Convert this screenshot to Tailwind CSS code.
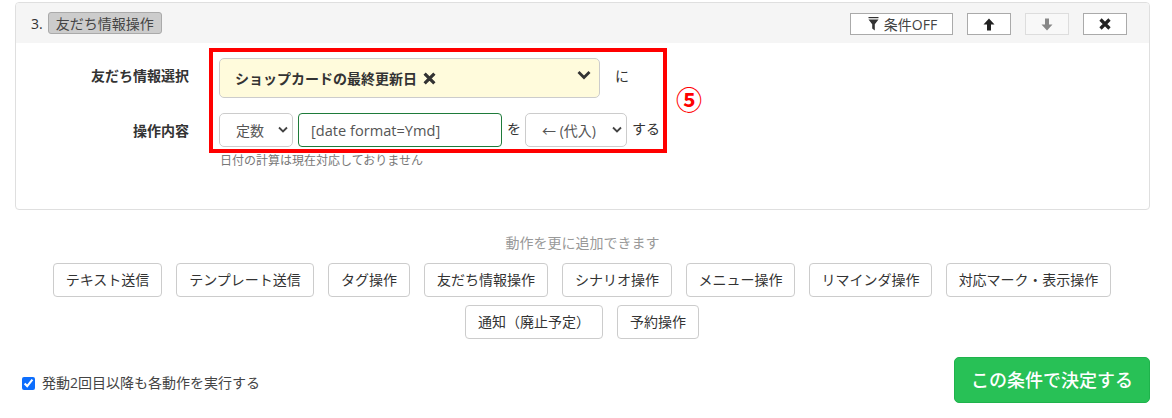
<!DOCTYPE html>
<html lang="ja">
<head>
    <meta charset="UTF-8">
    <title>友だち情報操作</title>
    <script src="https://cdn.jsdelivr.net/npm/@tailwindcss/browser@4"></script>
</head>
<body class="bg-white text-[#333] font-['Open_Sans','Noto_Sans_CJK_JP',sans-serif] text-[14px] overflow-hidden">
<div class="relative w-[1172px] h-[418px] pt-[2px] pl-[15px] pr-[22px]">

    <!-- Action card -->
    <div class="h-[208px] border border-[#dfdfdf] rounded-[4px] overflow-hidden">
        <div class="h-[40px] bg-[#f5f5f5] flex items-center pl-[15px] pr-[22px]">
            <span class="mr-[5px]">3.</span>
            <span class="h-[22px] px-[7px] flex items-center bg-[#cccccc] border border-[#aaa] rounded-[3px] text-[#444]">友だち情報操作</span>
            <div class="ml-auto mt-[2px] flex items-center gap-[14px]">
                <button class="w-[103px] h-[22px] flex items-center justify-center gap-[5px] pl-[2px] bg-white border border-[#aaa] text-[#444]">
                    <svg width="11" height="14" viewBox="0 0 11 14" fill="#333"><rect x="0.5" y="0" width="10" height="1.2"/><path d="M0.5 2.6h10L6.8 7.2V13.5L4.2 11.5V7.2z"/></svg>
                    条件OFF
                </button>
                <button class="w-[44px] h-[22px] flex items-center justify-center bg-white border border-[#aaa]">
                    <svg width="12" height="13" viewBox="0 0 12 13" fill="#222"><path d="M6 0.5L11.5 6.5H8V12.5H4V6.5H0.5z"/></svg>
                </button>
                <button class="w-[44px] h-[22px] flex items-center justify-center bg-[#f8f8f8] border border-[#ddd]">
                    <svg width="12" height="13" viewBox="0 0 12 13" fill="#888"><path d="M6 12.5L11.5 6.5H8V0.5H4V6.5H0.5z"/></svg>
                </button>
                <button class="w-[44px] h-[22px] flex items-center justify-center bg-white border border-[#aaa]">
                    <svg width="12" height="12" viewBox="0 0 12 12" fill="none" stroke="#222" stroke-width="3.2"><path d="M1.5 1.5L10.5 10.5M10.5 1.5L1.5 10.5"/></svg>
                </button>
            </div>
        </div>

        <div class="pt-[14px]">
            <div class="flex items-center h-[42px]">
                <label class="w-[173px] text-right font-bold -mt-[5px]">友だち情報選択</label>
                <div class="ml-[30px] w-[381px] h-[40px] flex items-center justify-between pl-[15px] pr-[8px] bg-[#fffbdc] border border-[#ccc] rounded-[5px]">
                    <span class="font-bold flex items-center gap-[6px]">ショップカードの最終更新日
                        <svg width="13" height="13" viewBox="0 0 12 12" fill="none" stroke="#333" stroke-width="3"><path d="M1.5 1.5L10.5 10.5M10.5 1.5L1.5 10.5"/></svg>
                    </span>
                    <svg class="-mt-[6px]" width="14" height="10" viewBox="0 0 14 10" fill="none" stroke="#333" stroke-width="2.8"><path d="M1.5 2L7 7.5L12.5 2"/></svg>
                </div>
                <span class="ml-[15px] -mt-[5px]">に</span>
            </div>

            <div class="flex items-center h-[34px] mt-[14px]">
                <label class="w-[173px] text-right font-bold">操作内容</label>
                <div class="relative ml-[30px] w-[74px] h-[34px]">
                    <select class="appearance-none w-full h-full pl-[16px] bg-white border border-[#ccc] rounded-[5px] text-[#555]"><option>定数</option></select>
                    <svg class="absolute right-[5px] top-[13px]" width="10" height="8" viewBox="0 0 10 8" fill="none" stroke="#444" stroke-width="1.8"><path d="M1 1.5L5 5.5L9 1.5"/></svg>
                </div>
                <input type="text" value="[date format=Ymd]" class="ml-[5px] w-[204px] h-[34px] px-[12px] border border-[#1e7b3a] rounded-[4px] text-[14.6px] text-[#555]">
                <span class="ml-[5px] w-[13px] -mt-[3px]">を</span>
                <div class="relative ml-[5px] w-[102px] h-[34px]">
                    <select class="appearance-none w-full h-full pl-[16px] bg-white border border-[#ccc] rounded-[5px] text-[#555]"><option>← (代入)</option></select>
                    <svg class="absolute right-[5px] top-[13px]" width="10" height="8" viewBox="0 0 10 8" fill="none" stroke="#444" stroke-width="1.8"><path d="M1 1.5L5 5.5L9 1.5"/></svg>
                </div>
                <span class="ml-[5px] -mt-[3px]">する</span>
            </div>
            <p class="ml-[204px] mt-[6px] text-[12px] leading-[16px] text-[#777]">日付の計算は現在対応しておりません</p>
        </div>
    </div>

    <!-- Add more actions -->
    <p class="mt-[24px] text-center leading-[18px] text-[#999]">動作を更に追加できます</p>
    <div class="mt-[11px] pr-[1px] flex flex-wrap justify-center gap-x-[14px] gap-y-[8px]">
        <button class="w-[109px] h-[34px] pb-[1px] bg-white border border-[#ccc] rounded-[4px]">テキスト送信</button>
        <button class="w-[138px] h-[34px] pb-[1px] bg-white border border-[#ccc] rounded-[4px]">テンプレート送信</button>
        <button class="w-[82px] h-[34px] pb-[1px] bg-white border border-[#ccc] rounded-[4px]">タグ操作</button>
        <button class="w-[124px] h-[34px] pb-[1px] bg-white border border-[#ccc] rounded-[4px]">友だち情報操作</button>
        <button class="w-[110px] h-[34px] pb-[1px] bg-white border border-[#ccc] rounded-[4px]">シナリオ操作</button>
        <button class="w-[109px] h-[34px] pb-[1px] bg-white border border-[#ccc] rounded-[4px]">メニュー操作</button>
        <button class="w-[123px] h-[34px] pb-[1px] bg-white border border-[#ccc] rounded-[4px]">リマインダ操作</button>
        <button class="w-[165px] h-[34px] pb-[1px] bg-white border border-[#ccc] rounded-[4px]">対応マーク・表示操作</button>
        <button class="w-[138px] h-[34px] pb-[1px] bg-white border border-[#ccc] rounded-[4px]">通知（廃止予定）</button>
        <button class="w-[82px] h-[34px] pb-[1px] bg-white border border-[#ccc] rounded-[4px]">予約操作</button>
    </div>

    <!-- Footer -->
    <div class="mt-[18px] flex items-center justify-between">
        <label class="ml-[7px] mt-[6px] flex items-center gap-[7px] text-[#444]">
            <input type="checkbox" checked class="w-[13px] h-[13px] mt-[1px] accent-[#0d6efd]">
            <span class="-mt-[1px]">発動2回目以降も各動作を実行する</span>
        </label>
        <button class="w-[196px] h-[46px] bg-[#28c156] border border-[#1fb34c] rounded-[5px] text-white text-[18px] font-medium">この条件で決定する</button>
    </div>

    <!-- Annotation over the form -->
    <div class="absolute left-[209px] top-[48px] w-[458px] h-[105px] border-[4px] border-[#ff0000]"></div>
    <span class="absolute left-[676px] top-[85px] text-[#ff0000] text-[26px] leading-[30px] font-bold">⑤</span>
</div>
</body>
</html>
